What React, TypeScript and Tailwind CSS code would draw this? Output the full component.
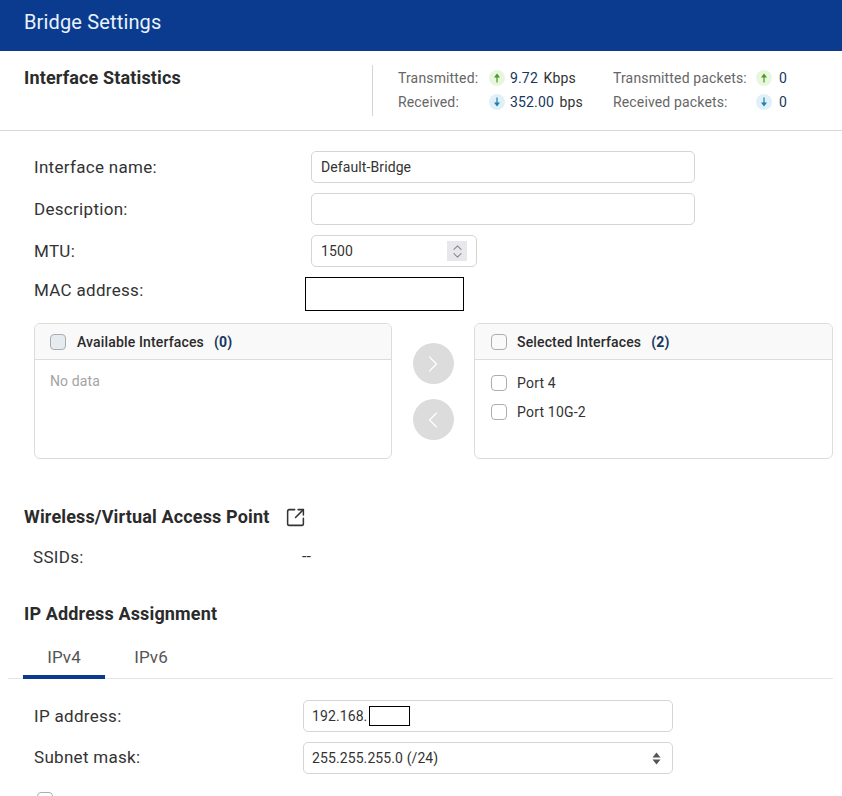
import { ChevronLeft, ChevronRight, ChevronsUpDown, SquareArrowOutUpRight } from "lucide-react";

function StatIcon({ up }: { up: boolean }) {
  return (
    <span className={`flex h-4 w-4 items-center justify-center rounded-full ${up ? "bg-[#e8f6df] text-[#4c9a1e]" : "bg-[#e0f0f8] text-[#1f7fae]"}`}>
      <svg width="8" height="10" viewBox="0 0 8 10" fill="currentColor" className={up ? "" : "rotate-180"}>
        <path d="M4 0.5 7 4.5H1Z" />
        <rect x="3.4" y="4" width="1.2" height="5.5" />
      </svg>
    </span>
  );
}

function Box({ className = "" }: { className?: string }) {
  return <span className={`block h-4 w-4 shrink-0 rounded-[4px] border border-[#a9adb3] ${className}`} />;
}

function FormRow({ label, className = "", children }: { label: string; className?: string; children?: React.ReactNode }) {
  return (
    <div className={`flex items-center ${className}`}>
      <label className={`${labelCls} w-[277px] pt-[2px]`}>{label}</label>
      {children}
    </div>
  );
}

const labelCls = "shrink-0 text-[17px] tracking-[0.3px] text-[#333]";
const inputCls = "flex h-[32px] items-center rounded-[5px] border border-[#d5d5d5] bg-white px-[9px] text-[14px] tracking-[0.1px] text-[#333]";
const headingCls = "text-[18px] leading-[24px] font-bold tracking-[0.15px] text-[#2b2b2b]";

export default function App() {
  return (
    <div className="h-[796px] w-[842px] overflow-hidden bg-white font-[family-name:Roboto,sans-serif]">
      <header className="flex h-[51px] items-center bg-[#0b3b8f] pb-[8px] pl-[24px] text-[20px] tracking-[0.15px] text-[#e8f3fb]">Bridge Settings</header>

      {/* statistics */}
      <section className="flex h-[80px] border-b border-[#d9d9d9] pl-[24px] pt-[14px]">
        <h2 className={`${headingCls} w-[348px] pt-[1px]`}>Interface Statistics</h2>
        <div className="flex h-[51px] border-l border-[#d5d5d5] pl-[25px] text-[14px] leading-[24px] tracking-[0.15px]">
          <div className="grid grid-cols-[91px_21px_103px_143px_23px_auto] content-start items-center pt-[1px]">
            <span className="text-[#666]">Transmitted:</span>
            <StatIcon up />
            <span className="whitespace-pre text-[#17375e]">9.72 <span className="ml-[2px] text-[#333]">Kbps</span></span>
            <span className="whitespace-nowrap text-[#666]">Transmitted packets:</span>
            <StatIcon up />
            <span className="text-[#17375e]">0</span>
            <span className="text-[#666]">Received:</span>
            <StatIcon up={false} />
            <span className="whitespace-pre text-[#17375e]">352.00 <span className="ml-[2px] text-[#333]">bps</span></span>
            <span className="whitespace-nowrap text-[#666]">Received packets:</span>
            <StatIcon up={false} />
            <span className="text-[#17375e]">0</span>
          </div>
        </div>
      </section>

      {/* interface form */}
      <div className="pl-[34px] pt-[20px]">
        <FormRow label="Interface name:">
          <div className={`${inputCls} w-[384px]`}>Default-Bridge</div>
        </FormRow>
        <FormRow label="Description:" className="mt-[10px]">
          <div className={`${inputCls} w-[384px]`} />
        </FormRow>
        <FormRow label="MTU:" className="mt-[10px]">
          <div className={`${inputCls} w-[166px] justify-between pr-[9px]`}>
            1500
            <span className="flex h-[20px] w-[20px] items-center justify-center bg-[#e8e8ec] text-[#8a8a8a]">
              <ChevronsUpDown className="h-[17px] w-[17px]" strokeWidth={1.5} />
            </span>
          </div>
        </FormRow>
        <div className="mt-[10px] flex items-center">
          <label className={`${labelCls} mb-[6px] w-[271px]`}>MAC address:</label>
          <div className="h-[34px] w-[159px] border border-black bg-white" />
        </div>

        {/* transfer lists */}
        <div className="mt-[12px] flex">
          <div className="h-[136px] w-[358px] rounded-[6px] border border-[#dcdcdc]">
            <div className="flex h-[36px] items-center gap-[10px] rounded-t-[6px] border-b border-[#dcdcdc] bg-[#f9f9f9] pl-[15px] text-[14px] leading-[18px] font-medium tracking-[0.15px] text-[#2b2b2b]">
              <Box className="bg-[#e6ebf0]" />
              <span className="ml-[1px]">Available Interfaces</span>
              <span className="font-bold text-[#17375e]">(0)</span>
            </div>
            <p className="pl-[15px] pt-[11px] text-[14px] tracking-[0.1px] text-[#a3a3a3]">No data</p>
          </div>

          <div className="flex w-[82px] flex-col items-center gap-[15px] pt-[20px]">
            <span className="flex h-[41px] w-[41px] items-center justify-center rounded-full bg-[#dcdcdc] text-white">
              <ChevronRight className="h-[28px] w-[28px]" strokeWidth={1} />
            </span>
            <span className="flex h-[41px] w-[41px] items-center justify-center rounded-full bg-[#dcdcdc] text-white">
              <ChevronLeft className="h-[28px] w-[28px]" strokeWidth={1} />
            </span>
          </div>

          <div className="h-[136px] w-[359px] rounded-[6px] border border-[#dcdcdc]">
            <div className="flex h-[36px] items-center gap-[10px] rounded-t-[6px] border-b border-[#dcdcdc] bg-[#f9f9f9] pl-[16px] text-[14px] leading-[18px] font-medium tracking-[0.15px] text-[#2b2b2b]">
              <Box />
              <span>Selected Interfaces</span>
              <span className="font-bold text-[#17375e]">(2)</span>
            </div>
            <div className="flex flex-col gap-[13px] pl-[16px] pt-[15px] text-[14px] leading-[16px] tracking-[0.2px] text-[#333]">
              <div className="flex items-center gap-[10px]"><Box />Port 4</div>
              <div className="flex items-center gap-[10px]"><Box />Port 10G-2</div>
            </div>
          </div>
        </div>
      </div>

      {/* wireless */}
      <div className="flex items-center pl-[24px] pt-[46px]">
        <h2 className={headingCls}>Wireless/Virtual Access Point</h2>
        <SquareArrowOutUpRight className="ml-[16px] h-[21px] w-[21px] text-[#333]" strokeWidth={1.75} />
      </div>
      <div className="flex items-center pl-[33px] pt-[16px] leading-[24px]">
        <span className={`${labelCls} w-[269px]`}>SSIDs:</span>
        <span className="text-[16px] text-[#333]">--</span>
      </div>

      {/* ip assignment */}
      <h2 className={`${headingCls} pl-[24px] pt-[33px]`}>IP Address Assignment</h2>
      <div className="mx-[8px] mt-[14px] flex h-[39px] w-[825px] border-b border-[#e5e5e5] pl-[15px] text-[17px] tracking-[0.1px] text-[#555]">
        <div className="flex h-[39px] w-[82px] items-start justify-center border-b-[4px] border-[#0b3b8f] pt-[5px]">IPv4</div>
        <div className="flex w-[92px] items-start justify-center pt-[5px]">IPv6</div>
      </div>

      <div className="pl-[34px] pt-[21px]">
        <div className="flex items-center">
          <label className={`${labelCls} w-[269px] pt-[2px]`}>IP address:</label>
          <div className={`${inputCls} w-[370px] pl-[8px]`}>
            192.168.
            <span className="ml-[2px] h-[20px] w-[41px] border border-black bg-white" />
          </div>
        </div>
        <div className="mt-[10px] flex items-center">
          <label className={`${labelCls} w-[269px]`}>Subnet mask:</label>
          <div className={`${inputCls} w-[370px] justify-between pl-[8px] pr-[11px]`}>
            255.255.255.0 (/24)
            <svg width="9" height="13" viewBox="0 0 9 13" fill="#555">
              <path d="M4.5 0.5 8.5 5.5H0.5Z" />
              <path d="M4.5 12.5 0.5 7.5H8.5Z" />
            </svg>
          </div>
        </div>
        <div className="ml-[3px] mt-[18px]"><Box /></div>
      </div>
    </div>
  );
}
